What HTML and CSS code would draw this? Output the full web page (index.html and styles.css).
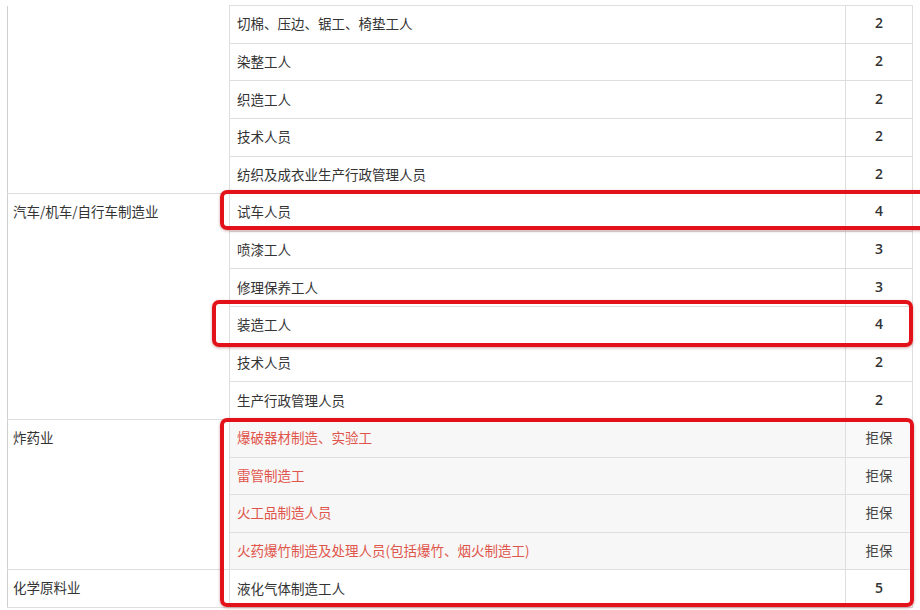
FILE: index.html
```html
<!DOCTYPE html>
<html lang="zh-CN">
<head>
<meta charset="utf-8">
<title>职业类别表</title>
<link rel="stylesheet" href="styles.css">
</head>
<body>
<div class="page">
  <table class="occ">
    <colgroup>
      <col class="c-ind">
      <col class="c-job">
      <col class="c-lvl">
    </colgroup>
    <tbody>
      <tr>
        <td class="ind ind-first" rowspan="5"></td>
        <td class="job">切棉、压边、锯工、椅垫工人</td>
        <td class="lvl">2</td>
      </tr>
      <tr><td class="job">染整工人</td><td class="lvl">2</td></tr>
      <tr><td class="job">织造工人</td><td class="lvl">2</td></tr>
      <tr><td class="job">技术人员</td><td class="lvl">2</td></tr>
      <tr><td class="job">纺织及成衣业生产行政管理人员</td><td class="lvl">2</td></tr>

      <tr>
        <td class="ind" rowspan="6">汽车/机车/自行车制造业</td>
        <td class="job">试车人员</td>
        <td class="lvl">4</td>
      </tr>
      <tr><td class="job">喷漆工人</td><td class="lvl">3</td></tr>
      <tr><td class="job">修理保养工人</td><td class="lvl">3</td></tr>
      <tr><td class="job">装造工人</td><td class="lvl">4</td></tr>
      <tr><td class="job">技术人员</td><td class="lvl">2</td></tr>
      <tr><td class="job">生产行政管理人员</td><td class="lvl">2</td></tr>

      <tr class="refused">
        <td class="ind" rowspan="4">炸药业</td>
        <td class="job">爆破器材制造、实验工</td>
        <td class="lvl">拒保</td>
      </tr>
      <tr class="refused"><td class="job">雷管制造工</td><td class="lvl">拒保</td></tr>
      <tr class="refused"><td class="job">火工品制造人员</td><td class="lvl">拒保</td></tr>
      <tr class="refused"><td class="job">火药爆竹制造及处理人员(包括爆竹、烟火制造工)</td><td class="lvl">拒保</td></tr>

      <tr>
        <td class="ind">化学原料业</td>
        <td class="job">液化气体制造工人</td>
        <td class="lvl">5</td>
      </tr>
    </tbody>
  </table>

  <div class="mark mark-a"></div>
  <div class="mark mark-b"></div>
  <div class="mark mark-c"></div>
</div>
</body>
</html>
```

FILE: styles.css
```css
html, body {
  margin: 0;
  padding: 0;
  background: #ffffff;
}

body {
  width: 920px;
  height: 610px;
  overflow: hidden;
  font-family: "Noto Sans CJK SC", "Noto Sans", sans-serif;
  color: #333333;
}

.page {
  position: relative;
  width: 920px;
  height: 610px;
  padding-top: 5px;
  padding-left: 7px;
  box-sizing: border-box;
}

.occ {
  border-collapse: collapse;
  table-layout: fixed;
  width: 906px;
  font-size: 13.5px;
}

.c-ind { width: 222px; }
.c-job { width: 616px; }
.c-lvl { width: 67px; }

.occ tr {
  height: 37.625px;
}

.occ td {
  border: 1px solid #dedede;
  padding: 0 0 2px 0;
  line-height: 20px;
}

.ind {
  vertical-align: top;
  padding: 7px 5px 0 5px !important;
  color: #333333;
  border-left-color: #cfcfcf !important;
}

.ind-first {
  border-top: none !important;
}

.job {
  vertical-align: middle;
  padding-left: 7px !important;
  color: #333333;
}

.lvl {
  vertical-align: middle;
  text-align: center;
  font-family: "Open Sans", "Noto Sans CJK SC", sans-serif;
  font-weight: 600;
  font-size: 14px;
  color: #333333;
}

.refused .job {
  background: #f7f7f7;
  color: #e0554b;
}

.refused .lvl {
  background: #f9f9f9;
  font-family: "Noto Sans CJK SC", sans-serif;
  font-weight: 400;
  font-size: 13.5px;
  color: #444444;
}

/* red annotation boxes drawn over the table */
.mark {
  position: absolute;
  border: 4.5px solid #e3121a;
  border-radius: 7px;
  box-shadow: 0 1px 3px rgba(120, 0, 0, 0.35);
  box-sizing: border-box;
  pointer-events: none;
}

.mark-a {
  left: 220px;
  top: 190px;
  width: 712px;
  height: 40px;
}

.mark-b {
  left: 212px;
  top: 300px;
  width: 701px;
  height: 47px;
}

.mark-c {
  left: 220px;
  top: 418px;
  width: 694px;
  height: 189px;
}
```
